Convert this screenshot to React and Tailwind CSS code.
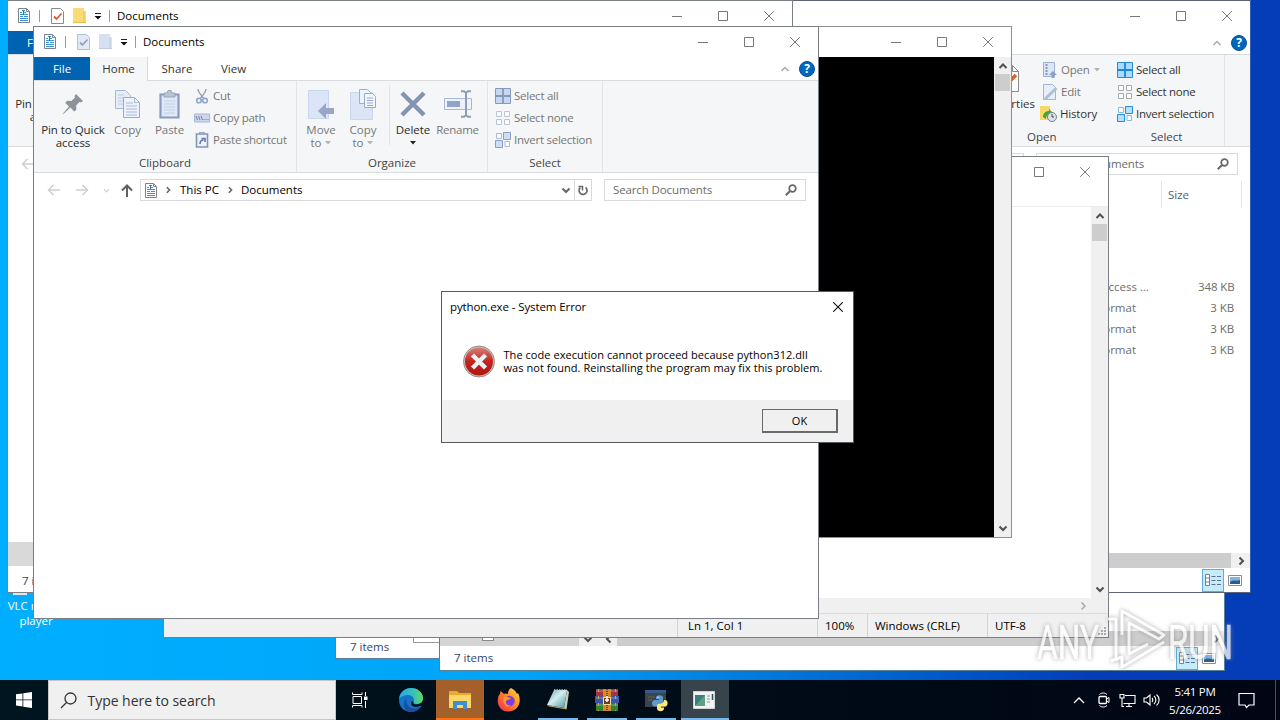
import clsx from "clsx";

/* ---------- small glyphs ---------- */

function Svg({ w = 16, h = w, className, children }) {
  return (
    <svg width={w} height={h} viewBox={`0 0 ${w} ${h}`} fill="none" className={clsx("shrink-0", className)}>
      {children}
    </svg>
  );
}

const arrows = {
  up: "M1.5 7 5 3.5 8.5 7",
  down: "M1.5 3.5 5 7 8.5 3.5",
  right: "M3.5 1.5 7 5 3.5 8.5",
  left: "M6.5 1.5 3 5 6.5 8.5",
};

function Chevron({ dir, color = "#505050", width = 2, size = 10 }) {
  return (
    <svg width={size} height={size} viewBox="0 0 10 10" fill="none" className="shrink-0">
      <path d={arrows[dir]} stroke={color} strokeWidth={width} />
    </svg>
  );
}

function DocIcon() {
  return (
    <Svg w={12} h={15}>
      <path d="M.5.5h8l3 3v11H.5z" fill="#fff" stroke="#7c8288" />
      <path d="M8.500.500v3h3" stroke="#7c8288" />
      <path d="M4 2.500h3M2 4.500h2M5 4.500h3M2 6.500h8M2 8.500h3M6 8.500h4M2 10.500h8M2 12.500h8" stroke="#3d93d3" />
      <path d="M5.500 2v5" stroke="#1c78c4" />
    </Svg>
  );
}

function CheckDoc({ muted }) {
  return (
    <Svg w={13} h={16}>
      <path d="M.5.5h9l3 3v12H.5z" fill={muted ? "#e3eaf7" : "#fff"} stroke={muted ? "#b5c0d8" : "#8b8b8b"} />
      <path d="m3 8.5 2.500 2.500L10.500 5.500" stroke={muted ? "#93a2c4" : "#e0553a"} strokeWidth="1.800" />
    </Svg>
  );
}

function FolderIcon({ muted }) {
  return (
    <Svg w={13} h={15}>
      <path d="M0 0h11v3h2v12H0z" fill={muted ? "#d7e0f1" : "#fbdb76"} />
      <path d="M11 3v12M0 14.5h13" stroke={muted ? "#bfcbe2" : "#e9c04c"} />
    </Svg>
  );
}

function QuickMenu() {
  return (
    <Svg w={8} h={8}>
      <path d="M1 1.500h6" stroke="#222" />
      <path d="M.5 4h7L4 7.500z" fill="#111" />
    </Svg>
  );
}

function HelpIcon() {
  return (
    <span className="flex size-4 items-center justify-center rounded-full border border-[#0a4f8f] bg-[#0067be] text-[12px] leading-none font-bold text-white">?</span>
  );
}

function SearchGlyph() {
  return (
    <Svg w={13} h={12}>
      <circle cx="7.500" cy="4.500" r="3.300" stroke="#686868" strokeWidth="1.700" />
      <path d="M5 7 .8 11.300" stroke="#686868" strokeWidth="2" />
    </Svg>
  );
}

function PinIcon() {
  return (
    <Svg w={22} h={22}>
      <path d="m14 1 7 7-2 1.4-1.3-.6-3.6 3.6.3 4.2-2.1 2-4-4L1.6 21 1 20.4l6-6.8-3.8-3.9 2-2 4.2.3L13 4.400l-.6-1.300z" fill="#8e9299" />
    </Svg>
  );
}

function CopyPages() {
  return (
    <Svg w={25} h={28}>
      <path d="M.5.5h10l5 5v13H.5z" fill="#e6edf9" stroke="#a7b7d9" />
      <path d="M3 5h6M3 8h9M3 11h9M3 14h9" stroke="#bccae5" />
      <path d="M8.500 7.500h11l5 5v15h-16z" fill="#edf2fb" stroke="#98aace" />
      <path d="M19.500 7.500v5h5M11 13h7M11 16h11M11 19h11M11 22h11M11 25h11" stroke="#a9b9da" />
    </Svg>
  );
}

function PasteIcon() {
  return (
    <Svg w={21} h={29}>
      <path d="M1.500 4.500h18v23h-18z" fill="#dfe8f7" stroke="#8c9bba" strokeWidth="2.200" />
      <path d="M5 3h3l1-2.500h3L13 3h3v4H5z" fill="#b9c3d6" stroke="#98a5bd" />
      <path d="M5 11h11M5 14h11M5 17h11M5 20h11M5 23h11" stroke="#c3d0e9" />
    </Svg>
  );
}

function CutIcon() {
  return (
    <Svg w={16}>
      <path d="M4 1c0 3 3 6 5.500 9M12 1c0 3-3 6-5.500 9" stroke="#99a0ae" strokeWidth="1.400" />
      <circle cx="5" cy="12.500" r="2.300" stroke="#8fa4cf" strokeWidth="1.600" />
      <circle cx="11" cy="12.500" r="2.300" stroke="#8fa4cf" strokeWidth="1.600" />
    </Svg>
  );
}

function CopyPathIcon() {
  return (
    <Svg w={16}>
      <path d="M.5 4h15v8H.5z" fill="#ccd7ec" stroke="#a6b6d5" />
      <path d="m2 6 1.500 4M4.500 6 6 10M7 6l1.500 4M9.500 9.500h1M11.500 9.500h1M13.500 9.500h1" stroke="#71809f" />
    </Svg>
  );
}

function PasteShortcutIcon() {
  return (
    <Svg w={16}>
      <path d="M2.500 2h11v13h-11z" fill="#eef2fa" stroke="#8294ba" strokeWidth="1.600" />
      <path d="M5 0h6v3H5z" fill="#9aa9c8" />
      <path d="M6 12c0-2.500 1-4 3.500-4M7.500 6.500H11V10" stroke="#66799f" strokeWidth="1.600" />
    </Svg>
  );
}

function MoveToIcon() {
  return (
    <Svg w={26} h={30}>
      <path d="M.5 1.500h20v28H.5z" fill="#dbe5f6" stroke="#c9d6ed" />
      <path d="M18 14v5h8v6h-8v5l-8-8z" fill="#98a7c6" />
    </Svg>
  );
}

function CopyToIcon() {
  return (
    <Svg w={26} h={31}>
      <path d="M.5 3.500h22v27H.5z" fill="#dbe5f6" stroke="#c9d6ed" />
      <path d="M9.500.500h8l3 3v11h-11z" fill="#edf2fb" stroke="#9cadd0" />
      <path d="M14.500 4.500h8l3 3v11h-11z" fill="#f2f6fc" stroke="#98aace" />
      <path d="M17 9h6M17 11.500h6M17 14h6M17 16.500h6" stroke="#98aace" />
    </Svg>
  );
}

function DeleteIcon() {
  return (
    <Svg w={26} h={26}>
      <path d="m2 2 22 22M24 2 2 24" stroke="#8492b3" strokeWidth="4.500" />
    </Svg>
  );
}

function RenameIcon() {
  return (
    <Svg w={28} h={28}>
      <path d="M.5 8.500h27v11H.5z" fill="#eef3fb" stroke="#a7b8da" />
      <path d="M3 11h13v6H3z" fill="#92a3c8" />
      <path d="M17 1.200h3l2 1.500 2-1.500h3M22 2.500v23M17 26.800h3l2-1.500 2 1.500h3" stroke="#8f9cb8" strokeWidth="2" />
    </Svg>
  );
}

function SelectAllIcon({ muted }) {
  return (
    <Svg w={16}>
      <path d="M.5.5h15v15H.5z" fill={muted ? "#c9d7ee" : "#a9dcff"} stroke={muted ? "#8598bd" : "#2b8ad6"} />
      <path d="M8 0v16M0 8h16" stroke={muted ? "#8598bd" : "#1c86dd"} strokeWidth="1.800" />
    </Svg>
  );
}

function SelectNoneIcon({ muted }) {
  return (
    <Svg w={16}>
      <path
        d="M1.500 1.500h5v5h-5zM9.500 1.500h5v5h-5zM1.500 9.500h5v5h-5zM9.500 9.500h5v5h-5z"
        fill="#fbfcfe"
        stroke={muted ? "#bac5dc" : "#a8a8a8"}
      />
    </Svg>
  );
}

function InvertIcon({ muted }) {
  return (
    <Svg w={16}>
      <path d="M1.500 1.500h5v5h-5zM10 9.500h4.500v5H10z" fill="#fbfcfe" stroke={muted ? "#a9bbdb" : "#8ab9df"} />
      <path d="M8.500.5h7v7h-7zM.5 8.500h7v7h-7z" fill={muted ? "#d0def3" : "#b5e1ff"} stroke={muted ? "#8a9ec7" : "#2b8ad6"} />
    </Svg>
  );
}

/* ---------- window parts ---------- */

function WindowButtons({ color = "#777" }) {
  return (
    <div className="ml-auto flex h-full shrink-0 items-center">
      <span className="flex w-[46px] justify-center">
        <Svg w={10}>
          <path d="M0 5.500h10" stroke={color} />
        </Svg>
      </span>
      <span className="flex w-[46px] justify-center">
        <Svg w={10}>
          <path d="M.5.5h9v9h-9z" stroke={color} />
        </Svg>
      </span>
      <span className="flex w-[46px] justify-center">
        <Svg w={10}>
          <path d="m.2.2 9.600 9.600M9.800.200.2 9.800" stroke={color} />
        </Svg>
      </span>
    </div>
  );
}

function BigButton({ icon, label, second, className, active, menu }) {
  return (
    <div className={clsx("flex shrink-0 flex-col items-center", active ? "text-[#2b2b2b]" : "text-[#767676]", className)}>
      <div className="flex h-[38px] items-center">{icon}</div>
      <div className="h-[13px] leading-[13px] whitespace-nowrap">{label}</div>
      <div className="flex h-[13px] items-center gap-1 leading-[13px]">
        {second}
        {menu && (
          <Svg w={6} h={4}>
            <path d="M0 0h6L3 3.500z" fill={active ? "#222" : "#b3b3b3"} />
          </Svg>
        )}
      </div>
    </div>
  );
}

function SmallButton({ icon, label, muted = true, menu }) {
  return (
    <div className={clsx("flex h-[22px] items-center gap-[3px] whitespace-nowrap", muted ? "text-[#767676]" : "text-[#333]")}>
      {icon}
      <span>{label}</span>
      {menu && (
        <Svg w={6} h={4} className="ml-px">
          <path d="M0 0h6L3 3.500z" fill="#b3b3b3" />
        </Svg>
      )}
    </div>
  );
}

function RibbonGroup({ label, className, children }) {
  return (
    <div className={clsx("flex shrink-0 flex-col border-r border-[#e2e4e6]", className)}>
      <div className="flex h-[73px] pt-1">{children}</div>
      <div className="text-center leading-[18px] tracking-normal text-[#444]">{label}</div>
    </div>
  );
}

function TitleBar({ muted }) {
  return (
    <div className="flex h-[30px] shrink-0 items-center pb-px pl-[10px]">
      <DocIcon />
      <span className="ml-[9px] h-3 w-px bg-[#999]" />
      <span className="ml-[11px]">
        <CheckDoc muted={muted} />
      </span>
      <span className="ml-[9px]">
        <FolderIcon muted={muted} />
      </span>
      <span className="ml-[8px]">
        <QuickMenu />
      </span>
      <span className="ml-[7px] h-3 w-px bg-[#999]" />
      <span className="ml-[7px] text-black">Documents</span>
      <WindowButtons />
    </div>
  );
}

function Tabs({ covered }) {
  return (
    <div className="flex h-[24px] shrink-0 items-stretch border-b border-[#dadbdc] leading-[23px] text-[#333]">
      <div className="w-[56px] bg-[#0063b1] text-center text-white">File</div>
      {!covered && (
        <>
          <div className="-mb-px w-[58px] border-r border-[#dadbdc] bg-[#f5f6f7] text-center">Home</div>
          <div className="w-[58px] text-center">Share</div>
          <div className="w-[55px] text-center">View</div>
          <div className="ml-auto flex items-center gap-[9px] pr-[3px]">
            <Chevron dir="up" color="#aaa" width={1.5} />
            <HelpIcon />
          </div>
        </>
      )}
    </div>
  );
}

function Ribbon({ covered }) {
  const pin = <BigButton className="ml-1 w-[70px]" active icon={<PinIcon />} label="Pin to Quick" second="access" />;

  return (
    <div className="flex h-[92px] shrink-0 border-b border-[#dadbdc] bg-[#f5f6f7] tracking-[-0.050px]">
      {covered ? (
        <div className="pt-1">{pin}</div>
      ) : (
        <>
          <RibbonGroup label="Clipboard" className="w-[263px]">
            {pin}
            <BigButton className="w-[39px]" icon={<CopyPages />} label="Copy" />
            <BigButton className="w-[45px]" icon={<PasteIcon />} label="Paste" />
            <div className="ml-[2px] tracking-[-0.250px]">
              <SmallButton icon={<CutIcon />} label="Cut" />
              <SmallButton icon={<CopyPathIcon />} label="Copy path" />
              <SmallButton icon={<PasteShortcutIcon />} label="Paste shortcut" />
            </div>
          </RibbonGroup>
          <RibbonGroup label="Organize" className="w-[191px]">
            <BigButton className="ml-[3px] w-[42px]" icon={<MoveToIcon />} label="Move" second="to" menu />
            <BigButton className="w-[42px]" icon={<CopyToIcon />} label="Copy" second="to" menu />
            <span className="ml-[5px] h-[60px] w-px bg-[#e2e4e6]" />
            <BigButton className="w-[46px]" active icon={<DeleteIcon />} label="Delete" menu />
            <BigButton className="w-[43px] tracking-[-0.250px]" icon={<RenameIcon />} label="Rename" />
          </RibbonGroup>
          <RibbonGroup label="Select" className="w-[115px]">
            <div className="ml-[7px] tracking-[-0.250px]">
              <SmallButton icon={<SelectAllIcon muted />} label="Select all" />
              <SmallButton icon={<SelectNoneIcon muted />} label="Select none" />
              <SmallButton icon={<InvertIcon muted />} label="Invert selection" />
            </div>
          </RibbonGroup>
        </>
      )}
    </div>
  );
}

function BackArrow() {
  return (
    <Svg w={14} h={12}>
      <path d="M13 6H1.500M6.500 1l-5 5 5 5" stroke="#cfcfcf" strokeWidth="1.500" />
    </Svg>
  );
}

function NavRow() {
  return (
    <div className="flex h-[34px] shrink-0 items-center pr-3 pl-[13px]">
      <BackArrow />
      <Svg w={14} h={12} className="ml-[14px]">
        <path d="M1 6h11.500M7.500 1l5 5-5 5" stroke="#cfcfcf" strokeWidth="1.500" />
      </Svg>
      <span className="ml-[14px]">
        <Chevron dir="down" color="#cfcfcf" width={1.5} size={7} />
      </span>
      <Svg w={12} h={13} className="ml-[11px]">
        <path d="M6 13V1.500M1 6.500l5-5 5 5" stroke="#606060" strokeWidth="2" />
      </Svg>
      <div className="ml-[7px] flex h-[22px] w-[452px] items-center border border-[#d9d9d9] pl-1 text-black">
        <DocIcon />
        <span className="mr-[6px] ml-[7px]">
          <Chevron dir="right" color="#666" size={8} />
        </span>
        <span className="ml-[2px]">This PC</span>
        <span className="mx-[7px]">
          <Chevron dir="right" color="#666" size={8} />
        </span>
        Documents
        <span className="mr-[3px] ml-auto">
          <Chevron dir="down" color="#666" />
        </span>
        <span className="flex h-full w-[17px] items-center justify-center border-l border-[#d9d9d9]">
          <Svg w={12} h={12}>
            <path d="M3.200 3.600a4 4 0 1 0 5.400-.3" stroke="#686868" strokeWidth="1.700" />
            <path d="M1.500 2.500h4v4" stroke="#686868" strokeWidth="1.500" />
          </Svg>
        </span>
      </div>
      <div className="ml-3 flex h-[22px] w-[202px] items-center justify-between border border-[#d9d9d9] pr-[7px] pl-2 text-[#6b6b6b]">
        <span className="tracking-[-0.120px]">Search Documents</span>
        <SearchGlyph />
      </div>
    </div>
  );
}

function ExplorerWindow({ className, muted, covered, children }) {
  return (
    <section className={clsx("absolute flex w-[786px] flex-col border border-[#7a7f85] bg-white", className)}>
      <TitleBar muted={muted} />
      <Tabs covered={covered} />
      <Ribbon covered={covered} />
      {covered ? (
        <div className="flex h-[34px] items-center pl-[13px]">
          <BackArrow />
        </div>
      ) : (
        <NavRow />
      )}
      {children}
    </section>
  );
}

function ViewButtons() {
  return (
    <>
      <span className="flex h-[23px] w-[22px] items-center justify-center border border-[#5aaed8] bg-[#c5ecfb]">
        <Svg w={16} h={12}>
          <path d="M.5.5h4v11h-4zM.5 4h4M.5 8h4" fill="#fff" stroke="#8a7c70" />
          <path d="M6.500 2.500h4M12 2.500h4M6.500 6.500h4M12 6.500h4M6.500 10.500h4M12 10.500h4" stroke="#5f6d91" />
        </Svg>
      </span>
      <Svg w={14} h={11} className="mr-2 ml-1">
        <path d="M.5.5h13v10H.5z" fill="#fff" stroke="#8c8c8c" />
        <path d="M2 2h10v7H2z" fill="#7eb6e8" />
        <path d="M2 7c4-3 6 0 10-2v4H2z" fill="#2c5d86" />
      </Svg>
    </>
  );
}

const files = [
  ["Access ...", "348 KB"],
  ["Format", "3 KB"],
  ["Format", "3 KB"],
  ["Format", "3 KB"],
];

function WideExplorer() {
  return (
    <section className="absolute top-0 left-[780px] flex h-[593px] w-[471px] flex-col border border-[#5d6675] border-r-[#2f5fb5] bg-white">
      <div className="flex h-[30px] shrink-0 items-center pb-px">
        <WindowButtons />
      </div>
      <div className="flex h-[24px] shrink-0 items-center justify-end gap-[9px] border-b border-[#dadbdc] pr-[3px]">
        <Chevron dir="up" color="#aaa" width={1.5} />
        <HelpIcon />
      </div>
      <div className="flex h-[92px] shrink-0 border-b border-[#dadbdc] bg-[#f5f6f7] pl-[194px]">
        <div className="flex w-[132px] shrink-0 flex-col">
          <div className="flex h-[73px] pt-1">
            <div className="flex w-[63px] flex-col items-end pr-[3px] text-[#333]">
              <div className="flex h-[38px] items-center pr-4">
                <Svg w={22} h={27}>
                  <path d="M.5.5h15l6 6v20H.5z" fill="#fff" stroke="#8b8b8b" />
                  <path d="M15.500.5v6h6" stroke="#8b8b8b" />
                  <path d="m5 13 5 6 9-9" stroke="#d9622b" strokeWidth="3.500" />
                </Svg>
              </div>
              <div className="leading-[13px]">Properties</div>
            </div>
            <div className="ml-[4px] tracking-[-0.200px]">
              <SmallButton
                menu
                icon={
                  <Svg w={16}>
                    <path d="M1.500.5h11v14h-11z" fill="#dce6f6" stroke="#9fb0d0" />
                    <path d="M3.500 3h2M3.500 6h2M3.500 9h2M3.500 12h2" stroke="#6e7f9f" strokeWidth="1.500" />
                    <path d="m11 9 4 4h-2.500v3h-3v-3H7z" fill="#8da0c6" />
                  </Svg>
                }
                label="Open"
              />
              <SmallButton
                icon={
                  <Svg w={16}>
                    <path d="M1.500.5h9l3 3v12h-12z" fill="#e9effa" stroke="#a4b4d4" />
                    <path d="M3 15 14.500 4" stroke="#aebedd" strokeWidth="3" />
                  </Svg>
                }
                label="Edit"
              />
              <SmallButton
                muted={false}
                icon={
                  <Svg w={17} h={16} className="-ml-[2px]">
                    <path d="M0 0h10v14H0z" fill="#f8d968" />
                    <path d="M3 11c0-4 3-6 6-6v-2l4 4-4 4V9c-2 0-3 1-3 4z" fill="#3fa83f" />
                    <circle cx="12" cy="11" r="4.500" fill="#d8e5ea" stroke="#76858a" />
                    <path d="M12 8v3h2" stroke="#445" />
                  </Svg>
                }
                label="History"
              />
            </div>
          </div>
          <div className="pl-[52px] leading-[18px] text-[#444]">Open</div>
        </div>
        <div className="flex w-[118px] shrink-0 flex-col border-r border-[#e2e4e6] pl-[10px]">
          <div className="h-[73px] pt-1 tracking-[-0.250px]">
            <SmallButton muted={false} icon={<SelectAllIcon />} label="Select all" />
            <SmallButton muted={false} icon={<SelectNoneIcon />} label="Select none" />
            <SmallButton muted={false} icon={<InvertIcon />} label="Invert selection" />
          </div>
          <div className="pr-[8px] text-center leading-[18px] text-[#444]">Select</div>
        </div>
      </div>
      <div className="flex h-[34px] shrink-0 items-center justify-end pr-3">
        <div className="mr-3 h-[22px] w-[200px] border border-[#d9d9d9]" />
        <div className="flex h-[22px] w-[202px] items-center justify-between border border-[#d9d9d9] pr-[7px] pl-2 text-[#6b6b6b]">
          <span className="tracking-[-0.120px]">Search Documents</span>
          <SearchGlyph />
        </div>
      </div>
      <div className="mr-2 ml-auto flex h-[27px] w-[81px] items-center border-x border-[#e5e5e5] pl-[6px] text-[#4c607a]">Size</div>
      <div className="mt-[68px] flex-1 text-[#6d6d6d]">
        {files.map(([type, size], i) => (
          <div key={i} className="flex h-[21px] items-center pr-[16px] whitespace-nowrap">
            <span className={clsx("ml-auto", i ? "mr-[62px]" : "mr-[49px]")}>{type}</span>
            <span className="w-9 text-right tracking-[-0.100px]">{size}</span>
          </div>
        ))}
      </div>
      <div className="flex h-[15px] shrink-0 items-center bg-[#f0f0f0]">
        <span className="h-full flex-1 bg-[#cdcdcd]" />
        <span className="flex w-[19px] justify-center pl-px">
          <Chevron dir="right" />
        </span>
      </div>
      <div className="flex h-[24px] shrink-0 items-center justify-end">
        <ViewButtons />
      </div>
    </section>
  );
}

function BackWindows() {
  return (
    <>
      <section className="absolute top-[500px] left-[335px] flex h-[159px] w-[300px] flex-col justify-end border border-[#5a7f99] bg-white">
        <div className="ml-[77px] h-[9px] w-10 border-b border-l border-[#999]" />
        <div className="mt-[-5px] mb-[3px] pl-[14px] leading-[17px] text-[#33466b]">7 items</div>
      </section>
      <section className="absolute top-[300px] left-[439px] flex h-[371px] w-[786px] flex-col justify-end border border-[#5a7f99] bg-white">
        <div className="flex h-[15px] items-center bg-[#f0f0f0]">
          <span className="flex h-full w-[139px] bg-[#d4d4d4] pl-[42px]">
            <span className="h-[10px] w-3 border border-[#888] bg-white" />
          </span>
          <span className="flex w-[18px] justify-center">
            <Chevron dir="down" />
          </span>
          <span className="flex w-[20px] justify-center pl-1">
            <Chevron dir="left" />
          </span>
          <span className="h-full flex-1 bg-[#cdcdcd]" />
          <span className="flex w-[17px] justify-center">
            <Chevron dir="right" />
          </span>
        </div>
        <div className="flex h-[24px] items-center pl-[14px] text-[#33466b]">
          7 items
          <span className="ml-auto flex items-center">
            <ViewButtons />
          </span>
        </div>
      </section>
    </>
  );
}

function ScrollBar({ className }) {
  return (
    <div className={clsx("flex w-[17px] shrink-0 flex-col items-center bg-[#f0f0f0]", className)}>
      <span className="flex h-[17px] items-center">
        <Chevron dir="up" />
      </span>
      <span className="h-[17px] w-[15px] bg-[#cdcdcd]" />
      <span className="mt-auto flex h-[18px] items-center">
        <Chevron dir="down" />
      </span>
    </div>
  );
}

function NotepadWindow() {
  return (
    <section className="absolute top-[156px] left-[163px] flex h-[482px] w-[946px] flex-col border border-[#7a7f85] bg-white">
      <div className="flex h-[29px] shrink-0 items-center">
        <WindowButtons />
      </div>
      <div className="h-[21px] shrink-0 border-b border-[#ececec]" />
      <div className="flex flex-1">
        <div className="flex-1" />
        <ScrollBar className="w-[16px]" />
      </div>
      <div className="flex h-[15px] shrink-0 items-center bg-[#f0f0f0]">
        <span className="mr-[20px] ml-auto">
          <Chevron dir="right" color="#aaa" width={1.5} />
        </span>
      </div>
      <div className="flex h-[24px] shrink-0 items-stretch border-t border-[#dcdcdc] bg-[#f0f0f0] pl-[513px] leading-[24px] text-black">
        <span className="w-[140px] border-l border-[#d4d4d4] pl-[10px]">Ln 1, Col 1</span>
        <span className="w-[50px] border-l border-[#d4d4d4] pl-[7px]">100%</span>
        <span className="w-[120px] border-l border-[#d4d4d4] pl-[7px]">Windows (CRLF)</span>
        <span className="flex-1 border-l border-[#d4d4d4] pl-[7px]">UTF-8</span>
        <Svg w={9} h={9} className="mr-px mb-px self-end">
          <path d="M7 0v9M4 3v6M1 6v3" stroke="#aaa" strokeWidth="2" strokeDasharray="2 1" />
        </Svg>
      </div>
    </section>
  );
}

function ConsoleWindow() {
  return (
    <section className="absolute top-[26px] left-[500px] flex h-[512px] w-[512px] flex-col border border-[#8b8f94] bg-white">
      <div className="flex h-[30px] shrink-0 items-center pb-px">
        <WindowButtons />
      </div>
      <div className="flex flex-1">
        <div className="flex-1 bg-black" />
        <ScrollBar />
      </div>
    </section>
  );
}

function ErrorDialog() {
  return (
    <section className="absolute top-[291px] left-[441px] flex h-[152px] w-[413px] flex-col border border-[#555b60] bg-white text-black">
      <div className="flex h-[30px] items-center justify-between pr-[10px] pb-px pl-2">
        <span className="tracking-[-0.100px]">python.exe - System Error</span>
        <Svg w={10}>
          <path d="m.2.2 9.600 9.600M9.800.200.2 9.800" stroke="#111" strokeWidth="1.100" />
        </Svg>
      </div>
      <div className="flex h-[78px] items-start pt-[23px] pl-[20px]">
        <Svg w={33}>
          <defs>
            <linearGradient id="errorRed" x1="0" x2="0" y1="0" y2="1">
              <stop offset="0" stopColor="#d98077" />
              <stop offset=".5" stopColor="#c5221c" />
              <stop offset="1" stopColor="#b01712" />
            </linearGradient>
          </defs>
          <circle cx="17" cy="16.500" r="15.500" fill="#c9c5c4" stroke="#9a8a88" />
          <circle cx="17" cy="16.500" r="14" fill="url(#errorRed)" />
          <path d="m10.500 10 13 13M23.500 10l-13 13" stroke="#e9f1f4" strokeWidth="4.500" />
        </Svg>
        <p className="ml-[8.500px] pt-[3px] text-[11px] leading-[13px] tracking-[0.050px] whitespace-nowrap">
          The code execution cannot proceed because python312.dll
          <br />
          was not found. Reinstalling the program may fix this problem.
        </p>
      </div>
      <div className="flex flex-1 items-center justify-end bg-[#f0f0f0] pr-[15px]">
        <button className="h-[24px] w-[76px] border border-r-2 border-b-2 border-[#696969] bg-[#f0f0f0] pt-px text-[11px]">OK</button>
      </div>
    </section>
  );
}

function Watermark() {
  return (
    <svg width="200" height="68" viewBox="0 0 200 68" fill="none" className="absolute top-[606px] left-[1036px] opacity-75 drop-shadow-[0_0_2px_#888]">
      <g fill="#fff" stroke="#fff" strokeWidth=".6" fontFamily="Roboto" fontSize="49" fontWeight="400">
        <text x="1" y="53" textLength="62" lengthAdjust="spacingAndGlyphs">
          ANY
        </text>
        <text x="132" y="53" textLength="65" lengthAdjust="spacingAndGlyphs">
          RUN
        </text>
      </g>
      <path d="M72 13h8v42M86 29V5l42 24-5 4-30-16v31l19-10M75 55l11-4v10l42-25" stroke="#fff" strokeWidth="3" strokeLinejoin="round" />
    </svg>
  );
}

/* ---------- taskbar ---------- */

function TaskItem({ children, className, line }) {
  return (
    <div className={clsx("flex h-10 w-12 shrink-0 flex-col items-center", className)}>
      <div className="flex h-[38px] items-center pt-[2px]">{children}</div>
      <span className={clsx("h-[2px]", line)} />
    </div>
  );
}

function Taskbar() {
  return (
    <footer className="absolute bottom-0 left-0 flex h-10 w-full items-center bg-linear-to-r from-[#001520] via-[#000d18] to-[#010615] text-white">
      <div className="flex w-12 justify-center">
        <Svg w={16}>
          <path d="m0 2.300 6.500-.9v6.100H0zM7.300 1.300 16 0v7.500H7.300zM0 8.300h6.500v6.200L0 13.600zM7.300 8.300H16V16l-8.700-1.200z" fill="#fff" />
        </Svg>
      </div>
      <div className="flex h-10 w-[288px] items-center border border-[#c8c8c8] bg-[#f0f0f0] pl-[11px] text-[14px] tracking-[-0.040px] text-[#333]">
        <Svg w={17} className="mr-[10.500px]">
          <circle cx="10.500" cy="6.500" r="5.500" stroke="#333" strokeWidth="1.300" />
          <path d="M6.500 10.500 1 16" stroke="#333" strokeWidth="1.300" />
        </Svg>
        <span className="pt-px">Type here to search</span>
      </div>
      <TaskItem className="mr-[3px]">
        <Svg w={18} h={16}>
          <path d="M2 4.500h8.500v7H2zM1.500.500v2h9.500v-2M1.500 15.500v-2h9.500v2M14.500 0v4M14.500 9v7" stroke="#fff" />
          <path d="M13 4.500h3.500V8H13z" fill="#fff" />
        </Svg>
      </TaskItem>
      <TaskItem className="mr-px">
        <Svg w={24}>
          <defs>
            <linearGradient id="edgeTop" x1="0" x2="1">
              <stop offset="0" stopColor="#2aa8e8" />
              <stop offset=".6" stopColor="#35c1b9" />
              <stop offset="1" stopColor="#5fdc5a" />
            </linearGradient>
          </defs>
          <path d="M0 12C0 5 5 0 12 0s12 5 12 10-4 7-7 6c4 3 5 2 6 1-2 4-6 7-11 7C5 24 0 19 0 12z" fill="#1574c9" />
          <path d="M0 11C1 4 6 0 12 0c7 0 12 5 12 10 0 4-3 6-6 6-3 0-4-1-3.500-2.500C16 10 13 7 9.500 7 5 7 1 9 0 11z" fill="url(#edgeTop)" />
          <path d="M9.500 9C5 11 7 21 16 20.500c2 0 4.500-1 6-2.500-3 5-8 7-13 5.500C3 21 4 11 9.500 9z" fill="#1b4f9c" />
          <path d="M14.500 13.500c-1.500 3 3.500 4 7 1.500L24 17l-3 1c-4 2-9 1-9-3 0-1 1-2 2.500-1.500z" fill="#001520" />
        </Svg>
      </TaskItem>
      <TaskItem className="mr-px bg-[#a4602a]" line="w-12 bg-[#ff7411]">
        <Svg w={22} h={20}>
          <path d="M0 1h8l2 2h12v15H0z" fill="#e9ab2f" />
          <path d="M0 5h22v13H0z" fill="#fbd768" />
          <path d="M4 19v-8h14v8h-4v-4H8v4z" fill="#3f8fd2" />
        </Svg>
      </TaskItem>
      <TaskItem className="mr-px">
        <Svg w={24}>
          <defs>
            <linearGradient id="fox" x1="1" x2="0" y1="0" y2="1">
              <stop offset="0" stopColor="#ffe14a" />
              <stop offset=".45" stopColor="#ff8a1f" />
              <stop offset="1" stopColor="#f5225f" />
            </linearGradient>
          </defs>
          <path d="M14 0c4 2 5 4 6 6l1-1c4 8 1 18-9 18.500C4 24-.5 17 1 10c.3-2 1-3 2-4l.5-3L7 6c2-1 3 0 4 0 0-3 1-5 3-6z" fill="url(#fox)" />
          <circle cx="12.500" cy="13" r="5.200" fill="#7d3de0" />
          <path d="M7 9c3-1 5 1 7 1-1 2-4 1-5 3-1 3 2 5 5 4-5 4-9-2-7-8z" fill="#ff9a2b" />
        </Svg>
      </TaskItem>
      <TaskItem className="mr-px" line="w-10 bg-[#76b9ed]">
        <Svg w={24}>
          <defs>
            <linearGradient id="note" x1="0" x2="1" y1="0" y2="1">
              <stop offset="0" stopColor="#5ea5b0" />
              <stop offset=".45" stopColor="#d3eef0" />
              <stop offset="1" stopColor="#458f9d" />
            </linearGradient>
          </defs>
          <path d="M8 2h13l-3 18-17-3z" fill="url(#note)" />
          <path d="m21 2 2 2-2.500 17.500L18 20z" fill="#c9cdb5" />
          <path d="m1 17 17 3 2.500 1.500L3 18.500z" fill="#b2a36c" />
          <path d="M8 2h13" stroke="#bdc7ca" strokeWidth="1.500" strokeDasharray="1.500 1" />
        </Svg>
      </TaskItem>
      <TaskItem className="mr-px" line="w-10 bg-[#76b9ed]">
        <Svg w={24} h={22}>
          <path d="M1 0h22v7H1z" fill="#a33443" />
          <path d="M0 7h24v7H0z" fill="#3d55a7" />
          <path d="M1 14h22v8H1z" fill="#33803c" />
          <path d="M1 2h22M1 9h22M1 16h22" stroke="#fff" strokeOpacity=".35" />
          <path d="M3.500 0v22M20.500 0v22" stroke="#d3a548" strokeDasharray="3 4" />
          <path d="M8 0h8v22H8z" fill="#d78a2c" />
          <path d="M12 0v7M12 16v6" stroke="#744716" strokeWidth="2" strokeDasharray="1 1" />
          <path d="M8.500 8.500h7v7h-7z" fill="#68401f" stroke="#f4dfaa" />
          <path d="M12 7v6M10 11h4" stroke="#fff" strokeWidth="1.500" />
        </Svg>
      </TaskItem>
      <TaskItem className="mr-px" line="w-10 bg-[#76b9ed]">
        <Svg w={24} h={24}>
          <path d="M1 2h21v17H1z" fill="#3e4348" />
          <path d="M1 2h21v3H1z" fill="#325c8c" />
          <path d="M4 9h7M4 12h4" stroke="#5c6267" />
          <path d="M12 11V9.500c0-3 7-3 7 0v4c0 3-6 1-6 5h-2c-4 0-4-6.500 0-6.500h4v-1z" fill="#5b9bd0" />
          <path d="M20 12h1c3.500 0 3.500 6.500 0 6.500h-4v1h3v1c0 3.500-7 3.500-7 0v-3c0-3 7-.5 7-5.500z" fill="#ffe873" />
          <path d="M13.500 9.500h1M17.500 21.500h1" stroke="#fff" strokeWidth="1.300" />
        </Svg>
      </TaskItem>
      <TaskItem className="bg-[#38444c]" line="w-12 bg-[#76b9ed]">
        <Svg w={22} h={18} className="-ml-[2px]">
          <path d="M.5.5h21v17H.5z" fill="#f1f3f4" stroke="#d1d5d7" />
          <path d="M2 4h10v11H2z" fill="#3d7e84" />
          <path d="M2 15 12 4v11z" fill="#5da184" />
          <path d="M14 5h3M14 8h3M14 11h3" stroke="#8898aa" />
          <path d="M19.500 3v6" stroke="#34495e" strokeWidth="1.500" />
        </Svg>
      </TaskItem>
      <div className="ml-auto flex items-center">
        <Svg w={12} h={8} className="mr-[13px]">
          <path d="m1 7 5-5 5 5" stroke="#fff" strokeWidth="1.300" />
        </Svg>
        <Svg w={12} h={16} className="mr-[9px]">
          <rect x="1" y="4.500" width="7.500" height="7" rx="1" stroke="#fff" strokeWidth="1.300" />
          <path d="m8.500 7 2.500-1.500v5L8.500 9M1.500 2.500c2-2 5.500-2 7.500 0M1.500 13.500c2 2 5.500 2 7.500 0" stroke="#fff" />
        </Svg>
        <Svg w={17} h={15} className="mr-[7px]">
          <path d="M6 2.500h10v8H4.500M7 13.500h6M10 10.500v3M1 1.500h4v3.500H1zM3 5v8.500h2" stroke="#fff" strokeWidth="1.100" />
        </Svg>
        <Svg w={17} h={14} className="mr-[8px]">
          <path d="M1 5h2.500L7 2v10L3.500 9H1zM9 5c1 1 1 3 0 4M11 3c2.500 2 2.500 6 0 8M13.500 1.500c3.500 3 3.500 8 0 11" stroke="#fff" strokeWidth="1.100" />
        </Svg>
        <div className="mt-px w-[54px] text-center text-[11.500px] leading-[18px] tracking-[-0.300px] whitespace-nowrap">
          <div>5:41 PM</div>
          <div>5/26/2025</div>
        </div>
        <Svg w={17} h={17} className="mr-[20px] ml-[16px]">
          <path d="M1 1.500h15v11.500h-5L8.500 15.500 7 13H1z" stroke="#fff" strokeWidth="1.200" />
        </Svg>
        <span className="mr-1 h-10 w-px bg-[#4a5060]" />
      </div>
    </footer>
  );
}

export default function App() {
  return (
    <main className="relative h-[720px] w-[1280px] overflow-hidden bg-linear-to-r from-[#00aeff] from-0% via-[#00a5f8] via-40% to-[#053db8] to-85% font-['Open_Sans','Noto_Sans',sans-serif] text-[11.500px]">
      <div className="absolute top-[592px] left-0 w-[72px] text-center leading-[15px] text-white">
        <div className="mr-auto ml-[13px] h-[6px] w-[14px] pb-[4px]">
          <div className="h-[3px] bg-[#e6e6e6]" />
        </div>
        VLC media player
      </div>
      <BackWindows />
      <WideExplorer />
      <ExplorerWindow className="top-0 left-[7px] h-[593px]" covered>
        <div className="flex-1" />
        <div className="h-[24px] bg-[#d9d9d9]" />
        <div className="flex h-[26px] items-center pt-[3px] pl-[14px] text-[#33466b]">7 items</div>
      </ExplorerWindow>
      <NotepadWindow />
      <ConsoleWindow />
      <ExplorerWindow className="top-[26px] left-[33px] h-[593px]" muted />
      <ErrorDialog />
      <Watermark />
      <Taskbar />
    </main>
  );
}
